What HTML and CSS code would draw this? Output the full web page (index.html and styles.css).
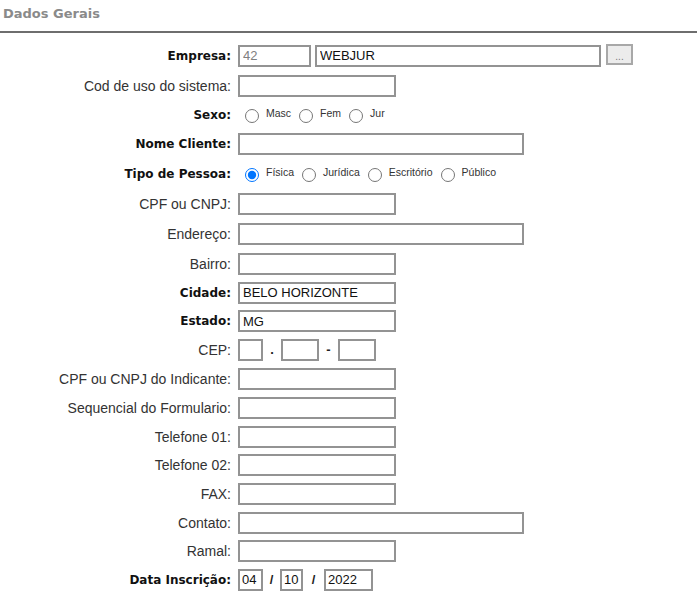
FILE: index.html
```html
<!DOCTYPE html>
<html lang="pt-BR">
<head>
<meta charset="utf-8">
<title>Dados Gerais</title>
<link rel="stylesheet" href="styles.css">
</head>
<body>
<div class="header">Dados Gerais</div>
<form class="form">
  <label class="lbl b">Empresa:</label>
  <div class="fld">
    <input class="in w73 ro" value="42" readonly>
    <input class="in w286 ml4" value="WEBJUR">
    <button type="button" class="btn">...</button>
  </div>

  <label class="lbl">Cod de uso do sistema:</label>
  <div class="fld"><input class="in w158"></div>

  <label class="lbl b">Sexo:</label>
  <div class="fld radios">
    <label class="opt"><input type="radio" name="sexo"><span>Masc</span></label>
    <label class="opt"><input type="radio" name="sexo"><span>Fem</span></label>
    <label class="opt"><input type="radio" name="sexo"><span>Jur</span></label>
  </div>

  <label class="lbl b">Nome Cliente:</label>
  <div class="fld"><input class="in w286"></div>

  <label class="lbl b">Tipo de Pessoa:</label>
  <div class="fld radios">
    <label class="opt"><input type="radio" name="tipo" checked><span>Física</span></label>
    <label class="opt"><input type="radio" name="tipo"><span>Jurídica</span></label>
    <label class="opt"><input type="radio" name="tipo"><span>Escritório</span></label>
    <label class="opt"><input type="radio" name="tipo"><span>Público</span></label>
  </div>

  <label class="lbl">CPF ou CNPJ:</label>
  <div class="fld"><input class="in w158"></div>

  <label class="lbl">Endereço:</label>
  <div class="fld"><input class="in w286"></div>

  <label class="lbl">Bairro:</label>
  <div class="fld"><input class="in w158"></div>

  <label class="lbl b">Cidade:</label>
  <div class="fld"><input class="in w158" value="BELO HORIZONTE"></div>

  <label class="lbl b">Estado:</label>
  <div class="fld"><input class="in w158" value="MG"></div>

  <label class="lbl">CEP:</label>
  <div class="fld">
    <input class="in w25">
    <span class="sep s18">.</span>
    <input class="in w38">
    <span class="sep s19">-</span>
    <input class="in w38">
  </div>

  <label class="lbl">CPF ou CNPJ do Indicante:</label>
  <div class="fld"><input class="in w158"></div>

  <label class="lbl">Sequencial do Formulario:</label>
  <div class="fld"><input class="in w158"></div>

  <label class="lbl">Telefone 01:</label>
  <div class="fld"><input class="in w158"></div>

  <label class="lbl">Telefone 02:</label>
  <div class="fld"><input class="in w158"></div>

  <label class="lbl">FAX:</label>
  <div class="fld"><input class="in w158"></div>

  <label class="lbl">Contato:</label>
  <div class="fld"><input class="in w286"></div>

  <label class="lbl">Ramal:</label>
  <div class="fld"><input class="in w158"></div>

  <label class="lbl b">Data Inscrição:</label>
  <div class="fld">
    <input class="in w25" value="04">
    <span class="sep s17">/</span>
    <input class="in w23" value="10">
    <span class="sep s21">/</span>
    <input class="in w49" value="2022">
  </div>
</form>
</body>
</html>
```

FILE: styles.css
```css
html, body {
  margin: 0;
  padding: 0;
  background: #ffffff;
}

body {
  font-family: "Liberation Sans", Arial, sans-serif;
  color: #333333;
}

.header {
  font-family: "DejaVu Sans", Verdana, sans-serif;
  font-weight: bold;
  font-size: 13px;
  line-height: 16px;
  color: #8a8a8a;
  padding: 6px 0 0 3px;
  height: 25px;
  border-bottom: 2px solid #6e6e6e;
  margin-right: 3px;
}

.form {
  display: grid;
  grid-template-columns: 231px 1fr;
  column-gap: 7px;
  grid-template-rows: 31px 29px 29px 30px 30px 30px 30px 29px 29px 28px 29px 29px 29px 29px 28px 29px 29px 28px 29px;
  margin-top: 7px;
}

.lbl {
  align-self: center;
  text-align: right;
  font-size: 14px;
  line-height: 16px;
  color: #333333;
  white-space: nowrap;
}

.lbl.b {
  font-family: "DejaVu Sans", Verdana, sans-serif;
  font-weight: bold;
  font-size: 12px;
  color: #111111;
}

.fld {
  display: flex;
  align-items: center;
}

.in {
  box-sizing: border-box;
  height: 22px;
  margin: 0;
  padding: 0 3px;
  border: 2px solid #939393;
  border-radius: 0;
  background: #ffffff;
  font-family: "Liberation Sans", Arial, sans-serif;
  font-size: 13px;
  color: #111111;
  outline: none;
}

.in.ro { color: #808080; }

.ml4 { margin-left: 4px; }

.w23 { width: 23px; }
.w25 { width: 25px; padding: 0 2px; }
.w38 { width: 38px; }
.w49 { width: 49px; padding: 0 2px; }
.w73 { width: 73px; }
.w158 { width: 158px; }
.w286 { width: 286px; }

.w23 { padding: 0 2px; }

.btn {
  box-sizing: border-box;
  width: 27px;
  height: 21px;
  margin: 0 0 2px 5px;
  padding: 4px 0 0 0;
  border: 2px solid #a8a8a8;
  background: #ececec;
  color: #7a7a7a;
  font-family: "Liberation Sans", Arial, sans-serif;
  font-size: 10px;
  line-height: 10px;
}

.sep {
  text-align: center;
  font-weight: bold;
  font-size: 13px;
  color: #222222;
}

.s17 { width: 17px; }
.s18 { width: 18px; }
.s19 { width: 19px; }
.s21 { width: 21px; }

.radios {
  padding-left: 7px;
}

.opt {
  display: flex;
  align-items: center;
  margin-right: 8px;
}

.opt input {
  width: 14px;
  height: 14px;
  margin: 2px 7px 0 0;
}

.opt span {
  font-size: 10.5px;
  line-height: 12px;
  color: #333333;
  margin-top: -4px;
}
```
